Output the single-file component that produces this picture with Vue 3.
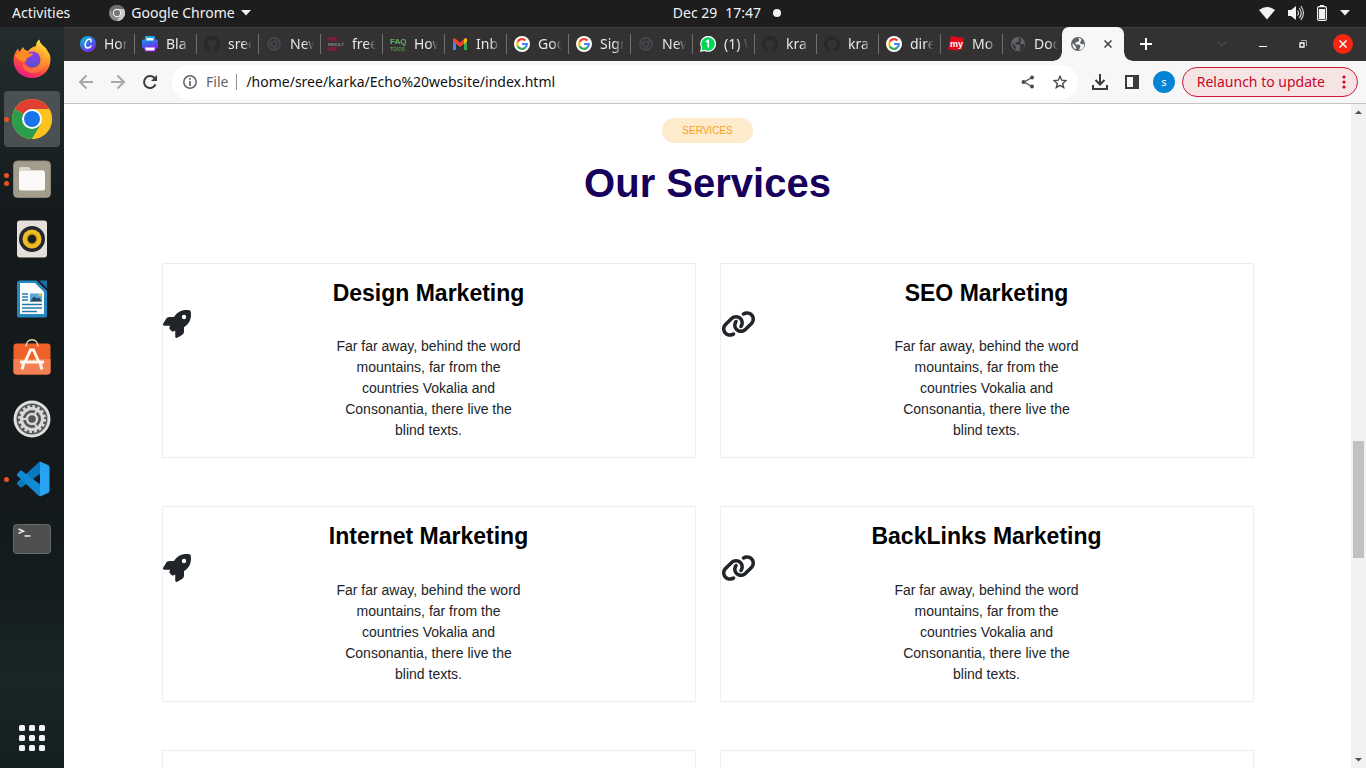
<script setup>
import { ref } from 'vue'

const tabs = [
  { icon: 'canva', title: 'Hor' },
  { icon: 'print', title: 'Bla' },
  { icon: 'github', title: 'sree' },
  { icon: 'chrome', title: 'New' },
  { icon: 'results', title: 'free' },
  { icon: 'faq', title: 'How' },
  { icon: 'gmail', title: 'Inb' },
  { icon: 'google', title: 'Goo' },
  { icon: 'google', title: 'Sign' },
  { icon: 'chrome', title: 'New' },
  { icon: 'whatsapp', title: '(1) W' },
  { icon: 'github', title: 'kra' },
  { icon: 'github', title: 'kra' },
  { icon: 'google', title: 'dire' },
  { icon: 'my', title: 'Mo' },
  { icon: 'globe', title: 'Doc' }
]

const dock = [
  { id: 'firefox', label: 'Firefox', dots: 0 },
  { id: 'chrome', label: 'Google Chrome', dots: 1, active: true },
  { id: 'files', label: 'Files', dots: 2 },
  { id: 'rhythmbox', label: 'Rhythmbox', dots: 0 },
  { id: 'writer', label: 'LibreOffice Writer', dots: 0 },
  { id: 'software', label: 'Ubuntu Software', dots: 0 },
  { id: 'settings', label: 'Settings', dots: 0 },
  { id: 'code', label: 'Visual Studio Code', dots: 1 },
  { id: 'terminal', label: 'Terminal', dots: 0 }
]

const blurb = 'Far far away, behind the word mountains, far from the countries Vokalia and Consonantia, there live the blind texts.'
const services = [
  { title: 'Design Marketing', icon: 'rocket' },
  { title: 'SEO Marketing', icon: 'link' },
  { title: 'Internet Marketing', icon: 'rocket' },
  { title: 'BackLinks Marketing', icon: 'link' }
]

const url = ref('/home/sree/karka/Echo%20website/index.html')
</script>

<template>
  <div class="desktop">
    <header class="topbar">
      <div class="top-left">
        <button class="top-btn" type="button">Activities</button>
        <button class="top-btn app-menu" type="button">
          <svg width="16" height="16" viewBox="0 0 16 16" aria-hidden="true">
            <circle cx="8" cy="8" r="8" fill="#8b8b8b" />
            <path d="M8 4h7a8 8 0 0 1-7 12l3.4-6z" fill="#c9c9c9" />
            <path d="M1 4a8 8 0 0 1 14 0H8L4.5 10z" fill="#6e6e6e" />
            <circle cx="8" cy="8" r="4.2" fill="#eee" />
            <circle cx="8" cy="8" r="3.1" fill="#777" />
          </svg>
          <span>Google Chrome</span>
          <svg width="10" height="6" viewBox="0 0 10 6" aria-hidden="true"><path d="M0 0h10L5 5.500z" fill="#f2f2f2" /></svg>
        </button>
      </div>
      <button class="top-btn clock" type="button"><span>Dec 29</span><span>17:47</span><i class="notice"></i></button>
      <button class="top-btn tray" type="button" aria-label="System menu">
        <svg width="16" height="14" viewBox="0 0 16 14"><path d="M0 4Q8-2 16 4L8 13.500z" fill="#f2f2f2" /></svg>
        <svg width="16" height="16" viewBox="0 0 16 16">
          <path d="M0 5h3l5-4v14l-5-4H0z" fill="#f2f2f2" />
          <path d="M9.500 5.500q2 2.500 0 5M11.200 3.200q4 4.800 0 9.600M12.800 1q5.200 7 0 14" fill="none" stroke="#cfcfcf" stroke-width="1.200" />
        </svg>
        <svg width="10" height="16" viewBox="0 0 10 16">
          <path d="M3 0h4v2H3z" fill="#f2f2f2" /><rect x="0.600" y="1.600" width="8.800" height="13.800" rx="1.500" fill="none" stroke="#f2f2f2" stroke-width="1.200" />
          <path d="M2 4h6v10H2z" fill="#f2f2f2" />
        </svg>
        <svg width="10" height="6" viewBox="0 0 10 6"><path d="M0 0h10L5 5.500z" fill="#f2f2f2" /></svg>
      </button>
    </header>

    <div class="workspace">
      <nav class="dock" aria-label="Dock">
        <button v-for="app in dock" :key="app.id" class="dock-item" :class="{ active: app.active }" type="button" :aria-label="app.label">
          <span class="dots"><i v-for="n in app.dots" :key="n"></i></span>
          <svg width="40" height="40" viewBox="0 0 40 40">
            <template v-if="app.id === 'firefox'">
              <defs>
                <linearGradient id="fx1" x1="0.800" y1="0" x2="0.300" y2="1"><stop offset="0" stop-color="#fff044" /><stop offset="0.400" stop-color="#ff9a2b" /><stop offset="0.700" stop-color="#ff4a3d" /><stop offset="1" stop-color="#e3168a" /></linearGradient>
                <linearGradient id="fx2" x1="0.300" y1="0" x2="0.600" y2="1"><stop offset="0" stop-color="#9a3cf0" /><stop offset="1" stop-color="#5551cf" /></linearGradient>
              </defs>
              <path d="M24 7c0-3 1.500-5.500 3.500-6.500 0 3 2 4.500 4.500 7 2.500 2 3 3 3.500 4.500 2.500 3 3.200 6 3 9C38 31.500 30.500 39 20 39S1.500 31.500 1.500 21c0-5 2.300-9 4.500-11.500.3 1.500.8 2.300 1.500 3C9 11.500 10 9 11 8c1 2.500 2.500 3.500 5 4 2-2.500 5-4.500 8-5z" fill="url(#fx1)" />
              <circle cx="20.500" cy="20.500" r="8" fill="url(#fx2)" />
              <path d="M3 16c5-3 11-3 14-1.500h4c-.5 2.500-2.500 3-5 4-2 1-2 2.500-1 4-3-.5-3.500-1-4 1-3-2-6.500-5-8-7.500z" fill="#ff8b23" />
              <path d="M20 11c7-1 10.500 4 10 10-1.500 6-6 8-9.500 8-4.500 0-8-2-9.500-6-1.500 7 3.500 11 9.500 11 8 0 14-6 13.500-14-.5-6-6.500-10-14-9z" fill="#ffa02f" opacity="0.450" />
            </template>
            <template v-else-if="app.id === 'chrome'">
              <circle cx="20" cy="20" r="20" fill="#fcc31e" />
              <path d="M20 20 2.700 10A20 20 0 0 1 37.300 10z" fill="#df3e30" />
              <path d="M2.700 10A20 20 0 0 0 20 40l9-15-9-5z" fill="#2c9d4c" />
              <path d="M20 40A20 20 0 0 0 37.300 10H20l9 15z" fill="#fcc31e" />
              <circle cx="20" cy="20" r="10" fill="#fff" /><circle cx="20" cy="20" r="8" fill="#1a73e8" />
            </template>
            <template v-else-if="app.id === 'files'">
              <rect x="1.500" y="2" width="37" height="36.500" rx="4" fill="#a49d8e" stroke="#8b8476" />
              <path d="M7 10q0-2 2-2h8l2 3h13v8H7z" fill="#ddd8cb" />
              <rect x="7" y="12" width="26" height="19.500" rx="2" fill="#fbfaf8" />
            </template>
            <template v-else-if="app.id === 'rhythmbox'">
              <rect x="5" y="1.500" width="30" height="37" rx="3" fill="#e5e0d9" />
              <circle cx="20" cy="20" r="13" fill="#25262f" /><circle cx="20" cy="20" r="9.500" fill="#eebd24" />
              <circle cx="20" cy="20" r="5.500" fill="#c79312" /><circle cx="20" cy="20" r="4.200" fill="#1d2023" />
            </template>
            <template v-else-if="app.id === 'writer'">
              <path d="M8 1.500h16.500L35 12v24.500q0 2-2 2H7q-2 0-2-2v-32q0-3 3-3z" fill="#2488bf" />
              <path d="M8 4h15l9 9v22H8z" fill="#fcfcfc" /><path d="M27 1.500h8v8z" fill="#1c6c9f" />
              <path d="M10 15h6M10 18h6M10 21h6M10 25.500h20M10 29h20M10 32.500h15" stroke="#2579a9" stroke-width="1.400" />
              <path d="M18 14.500h12v8H18z" fill="#58a8dc" /><path d="m18 22.500 4-5 3 2 2-1 3 4z" fill="#28485a" /><circle cx="28" cy="16" r="1.300" fill="#f8c332" />
            </template>
            <template v-else-if="app.id === 'software'">
              <rect x="1.500" y="4.500" width="37" height="31" rx="3" fill="#ee6129" /><path d="M1.500 20h37v12.500q0 3-3 3h-31q-3 0-3-3z" fill="#f37f52" />
              <path d="M14 7.500c0-9 12-9 12 0" fill="none" stroke="#ecd9b0" stroke-width="1.500" />
              <path d="m13.500 22 5-11h3l5 11M11.500 25l-1 4M28.500 25l1 4" fill="none" stroke="#fff7ef" stroke-width="3" stroke-linecap="square" />
              <path d="M8 23h24" stroke="#fff7ef" stroke-width="3" />
            </template>
            <template v-else-if="app.id === 'settings'">
              <circle cx="20" cy="20" r="18.500" fill="#dfdfde" /><circle cx="20" cy="20" r="15.500" fill="#555" />
              <circle cx="20" cy="20" r="12.500" fill="none" stroke="#d9d9d8" stroke-width="3" stroke-dasharray="2.600 2.309" />
              <circle cx="20" cy="20" r="10.500" fill="none" stroke="#d9d9d8" stroke-width="3" />
              <circle cx="20" cy="20" r="5" fill="none" stroke="#d9d9d8" stroke-width="2.500" />
              <path d="M15 20h-5M22.500 15.700l2.500-4.500M22.500 24.300l2.500 4.500" stroke="#d9d9d8" stroke-width="2" />
            </template>
            <template v-else-if="app.id === 'code'">
              <path d="m27.500 2.500-22 20.500c-.8.800-.8 1.800 0 2.500l2.500 2.500c.7.600 1.500.6 2.200.1L33 11z" fill="#0a78bd" />
              <path d="m27.500 37.500-22-20.500c-.8-.800-.8-1.800 0-2.500L8 12c.7-.6 1.500-.6 2.200-.1L33 29z" fill="#1189d3" />
              <path d="M28 2.500 36 6q1.500.7 1.500 2.500v23q0 1.800-1.500 2.500l-8 3.500z" fill="#28a3f2" />
            </template>
            <template v-else>
              <rect x="1.500" y="5.500" width="37" height="29" rx="3" fill="#4e4f4f" stroke="#6a6b6b" />
              <path d="m6.500 10 5 2.200-5 2.200" fill="none" stroke="#eee" stroke-width="1.500" /><path d="M12.500 17h6" stroke="#eee" stroke-width="1.500" />
            </template>
          </svg>
        </button>
        <button class="apps" type="button" aria-label="Show applications">
          <svg width="26" height="26" viewBox="0 0 26 26" fill="#f4f4f4">
            <template v-for="r in 3" :key="r"><rect v-for="c in 3" :key="c" :x="c * 10 - 10" :y="r * 10 - 10" width="6" height="6" rx="1.500" /></template>
          </svg>
        </button>
      </nav>

      <section class="browser">
        <div class="tabstrip">
          <div class="tabs">
            <button v-for="(tab, i) in tabs" :key="i" class="tab" type="button">
              <svg width="16" height="16" viewBox="0 0 16 16" aria-hidden="true">
                <template v-if="tab.icon === 'canva'">
                  <defs><linearGradient id="cv" x1="0.100" y1="0" x2="0.800" y2="1"><stop offset="0" stop-color="#00c4e0" /><stop offset="0.500" stop-color="#3a6fe0" /><stop offset="1" stop-color="#8a1df0" /></linearGradient></defs>
                  <circle cx="8" cy="8" r="8" fill="url(#cv)" /><path d="M10.500 6.300c1-1 .6-3.300-.9-3.300-2.400 0-4.400 3-4.400 5.800 0 4.200 4.400 4.200 6.200.7" fill="none" stroke="#fff" stroke-width="1.500" />
                </template>
                <template v-else-if="tab.icon === 'print'">
                  <defs><linearGradient id="pr" x1="0" y1="0" x2="0.300" y2="1"><stop offset="0" stop-color="#08c8dc" /><stop offset="0.500" stop-color="#356ee6" /><stop offset="1" stop-color="#9611ff" /></linearGradient></defs>
                  <path d="M3 0h10v3.500h1.500Q16 3.500 16 5v6q0 1.500-1.500 1.500H14l-1 3H3l-1-3h-.5Q0 12.500 0 11V5q0-1.500 1.500-1.500H3z" fill="url(#pr)" />
                  <path d="M4.500 2h7v2.500h-7zM3 11.500h10l-.8 3H3.800z" fill="#fff" />
                </template>
                <path v-else-if="tab.icon === 'github'" fill="#24292f" d="M8 0C3.580 0 0 3.580 0 8c0 3.540 2.290 6.530 5.470 7.590.4.070.55-.17.55-.38 0-.19-.01-.82-.01-1.490-2.010.37-2.530-.49-2.690-.94-.09-.23-.48-.94-.82-1.130-.28-.15-.68-.52-.01-.53.63-.01 1.080.58 1.230.82.720 1.210 1.870.87 2.330.66.070-.52.280-.87.510-1.070-1.780-.2-3.640-.89-3.640-3.950 0-.87.310-1.590.82-2.150-.08-.2-.36-1.020.08-2.120 0 0 .67-.21 2.200.82.640-.18 1.320-.27 2-.27s1.360.09 2 .27c1.530-1.040 2.200-.82 2.200-.82.440 1.100.160 1.920.080 2.120.51.560.82 1.270.82 2.150 0 3.070-1.870 3.750-3.650 3.950.29.250.54.730.54 1.480 0 1.070-.01 1.930-.01 2.200 0 .21.15.46.55.38A8 8 0 0 0 16 8c0-4.420-3.580-8-8-8z" />
                <g v-else-if="tab.icon === 'chrome'" fill="none" stroke="#43474b" stroke-width="1.800"><circle cx="8" cy="8" r="6" /><circle cx="8" cy="8" r="2.600" /><path d="M8 5.400h6M5.700 9.200 2.700 4.500M10.200 9.400l-2.700 4.800" /></g>
                <g v-else-if="tab.icon === 'results'" font-family="Liberation Sans" font-weight="700"><path d="M0 1h9v4H0zM0 11h9v4H0z" fill="#751c43" /><text x="0" y="10" font-size="4" fill="#8b898c">RESULTS</text></g>
                <g v-else-if="tab.icon === 'faq'" font-family="Liberation Sans" font-weight="700"><text x="0" y="8" font-size="8" fill="#62b15b">FAQ</text><text x="0" y="15" font-size="5" fill="#528c50">TOIDS</text></g>
                <template v-else-if="tab.icon === 'gmail'">
                  <path d="M1 4v10h3V7z" fill="#4285f4" /><path d="M12 7v7h3V4z" fill="#34a853" /><path d="m1 3 1.500-1L8 6.500 13.500 2 15 3v2.500L8 11 1 5.500z" fill="#ea4335" /><path d="M12 3.500q2-2 3-.5v2.500L12 8z" fill="#fbbc04" />
                </template>
                <template v-else-if="tab.icon === 'google'">
                  <circle cx="8" cy="8" r="8" fill="#fff" />
                  <g fill="none" stroke-width="2.200"><path d="M11.500 4.500A4.800 4.800 0 0 0 3.700 5.900" stroke="#ea4335" /><path d="M3.700 5.900a4.800 4.800 0 0 0 0 4.300" stroke="#fbbc05" /><path d="M3.700 10.200a4.800 4.800 0 0 0 7.500 1.400" stroke="#34a853" /><path d="M8 8h4.800q0 2.200-1.600 3.600" stroke="#4285f4" /></g>
                </template>
                <template v-else-if="tab.icon === 'whatsapp'">
                  <path d="m0 16 1-4.500a8 8 0 1 1 3.500 3.500z" fill="#fff" /><path d="m1.500 14.500.8-3a6.700 6.700 0 1 1 2.400 2.300z" fill="#00d757" /><path d="m6 6 2.300-1.500V11.500" fill="none" stroke="#fff" stroke-width="1.500" />
                </template>
                <g v-else-if="tab.icon === 'my'"><path d="m3 0 13 2-2 12-3-1-1 2-10-2z" fill="#e20a17" /><text x="2" y="11" font-family="Liberation Sans" font-size="9" font-weight="700" fill="#fff">my</text></g>
                <g v-else><circle cx="8" cy="8" r="7" fill="#5f6368" /><path d="M8 2.500q2 1 .5 3l-3 1v2h3q2 0 2 2l-1.500 3.500q6-.5 5-6-3 1-4-1l1.500-3.500Q10 1.500 8 2.500zM2.500 7l3.500 4v2.500Q2 12 2.500 7z" fill="#333132" /></g>
              </svg>
              <span class="tab-title">{{ tab.title }}</span>
            </button>
            <div class="tab-active">
              <svg width="16" height="16" viewBox="0 0 16 16" aria-hidden="true"><circle cx="8" cy="8" r="7" fill="#5f6368" /><path d="M8 2.500q2 1 .5 3l-3 1v2h3q2 0 2 2l-1.500 3.500q6-.5 5-6-3 1-4-1l1.500-3.500Q10 1.500 8 2.500zM2.500 7l3.500 4v2.500Q2 12 2.500 7z" fill="#f7f7f7" /></svg>
              <button class="icon-btn" type="button" aria-label="Close tab"><svg width="8" height="8" viewBox="0 0 8 8"><path d="m.5.5 7 7m0-7-7 7" stroke="#3c4043" stroke-width="1.500" /></svg></button>
            </div>
            <button class="icon-btn new-tab" type="button" aria-label="New tab"><svg width="12" height="12" viewBox="0 0 12 12"><path d="M6 0v12M0 6h12" stroke="#fff" stroke-width="2" /></svg></button>
          </div>
          <div class="window-controls">
            <button class="icon-btn" type="button" aria-label="Search tabs"><svg width="10" height="6" viewBox="0 0 10 6"><path d="m.5.5 4.500 4.500L9.500.5" fill="none" stroke="#454545" stroke-width="1.500" /></svg></button>
            <button class="icon-btn" type="button" aria-label="Minimize"><svg width="8" height="8" viewBox="0 0 8 8"><path d="M0 6.500h8" stroke="#fff" /></svg></button>
            <button class="icon-btn" type="button" aria-label="Restore"><svg width="8" height="8" viewBox="0 0 8 8" fill="none"><path d="M2 .5h5.500V6" stroke="#aaa" /><path d="M1 3h4v4H1z" stroke="#fff" stroke-width="1.300" /></svg></button>
            <button class="icon-btn win-close" type="button" aria-label="Close window"><svg width="8" height="8" viewBox="0 0 8 8"><path d="m.5.5 7 7m0-7-7 7" stroke="#fff" stroke-width="1.500" /></svg></button>
          </div>
        </div>

        <div class="toolbar">
          <div class="nav-buttons">
            <button class="icon-btn" type="button" aria-label="Back"><svg width="16" height="16" viewBox="0 0 16 16"><path d="M15 8H2m6.500-6.500L2 8l6.500 6.500" fill="none" stroke="#a8a8a8" stroke-width="2" /></svg></button>
            <button class="icon-btn" type="button" aria-label="Forward"><svg width="16" height="16" viewBox="0 0 16 16"><path d="M1 8h13M7.500 1.500 14 8l-6.500 6.500" fill="none" stroke="#a8a8a8" stroke-width="2" /></svg></button>
            <button class="icon-btn" type="button" aria-label="Reload"><svg width="16" height="16" viewBox="0 0 16 16"><path d="M13.500 10.500A6 6 0 1 1 12.300 3.800L14 5.500" fill="none" stroke="#3b3b3b" stroke-width="2" /><path d="M15 1v6H9z" fill="#3b3b3b" /></svg></button>
          </div>
          <div class="omnibox">
            <svg width="14" height="14" viewBox="0 0 14 14" aria-hidden="true"><circle cx="7" cy="7" r="6.200" fill="none" stroke="#5f6368" stroke-width="1.500" /><path d="M7 3v1.700M7 6v5" stroke="#5f6368" stroke-width="1.700" /></svg>
            <label class="scheme" for="address">File</label>
            <input id="address" v-model="url" class="address" type="text" spellcheck="false" />
            <button class="icon-btn" type="button" aria-label="Share"><svg width="14" height="14" viewBox="0 0 14 14"><path d="M11 2.500 3 7l8 4.500" fill="none" stroke="#4a4a4a" stroke-width="1.300" /><g fill="#4a4a4a"><circle cx="11" cy="2.500" r="2" /><circle cx="2.500" cy="7" r="2" /><circle cx="11" cy="11.500" r="2" /></g></svg></button>
            <button class="icon-btn" type="button" aria-label="Bookmark this page"><svg width="14" height="14" viewBox="0 0 14 14"><path d="m7 1.300 1.700 3.900 4.200.4-3.200 2.800 1 4.200L7 10.400l-3.700 2.200 1-4.200L1.100 5.600l4.200-.4z" fill="none" stroke="#4a4a4a" stroke-width="1.400" /></svg></button>
          </div>
          <div class="actions">
            <button class="icon-btn" type="button" aria-label="Downloads"><svg width="16" height="16" viewBox="0 0 16 16"><path d="M8 0v10M3.500 6 8 10.500 12.500 6M1 11v4h14v-4" fill="none" stroke="#3b3b3b" stroke-width="2" /></svg></button>
            <button class="icon-btn" type="button" aria-label="Side panel"><svg width="14" height="14" viewBox="0 0 14 14"><path d="M1 1h12v12H1z" fill="none" stroke="#3b3b3b" stroke-width="2" /><path d="M8 1h5v12H8z" fill="#3b3b3b" /></svg></button>
            <button class="avatar" type="button" aria-label="Profile">s</button>
            <button class="relaunch" type="button"><span>Relaunch to update</span><svg width="4" height="14" viewBox="0 0 4 14" fill="#c9061f"><circle cx="2" cy="2" r="1.600" /><circle cx="2" cy="7" r="1.600" /><circle cx="2" cy="12" r="1.600" /></svg></button>
          </div>
        </div>

        <div class="viewport">
          <main class="page">
            <span class="pill">SERVICES</span>
            <h1>Our Services</h1>
            <div class="cards">
              <article v-for="s in services" :key="s.title" class="card">
                <h2>{{ s.title }}</h2>
                <div class="glyph">
                  <svg v-if="s.icon === 'rocket'" width="28" height="28" viewBox="0 0 512 512"><path fill="#212529" d="M156.600 384.900L125.700 354c-8.500-8.500-11.500-20.800-7.700-32.200c3-8.900 7-20.500 11.800-33.800L24 288c-8.600 0-16.600-4.600-20.900-12.100s-4.200-16.700 .2-24.100l52.500-88.500c13-21.900 36.500-35.300 61.900-35.300l82.300 0c2.400-4 4.800-7.700 7.200-11.300C289.100-4.100 411.100-8.100 483.900 5.300c11.600 2.100 20.600 11.200 22.800 22.800c13.400 72.900 9.300 194.800-111.400 276.700c-3.500 2.400-7.300 4.800-11.300 7.200v82.300c0 25.400-13.400 49-35.300 61.900l-88.500 52.500c-7.400 4.400-16.600 4.500-24.100 .2s-12.100-12.200-12.100-20.900V380.800c-14.100 4.900-26.400 8.900-35.700 11.900c-11.200 3.600-23.400 .5-31.800-7.800zM384 168a40 40 0 1 0 0-80 40 40 0 1 0 0 80z" /></svg>
                  <svg v-else width="35" height="28" viewBox="0 0 640 512"><path fill="#212529" d="M579.800 267.700c56.500-56.500 56.500-148 0-204.500c-50-50-128.800-56.500-186.300-15.400l-1.600 1.100c-14.400 10.300-17.700 30.300-7.400 44.600s30.300 17.700 44.600 7.400l1.600-1.100c32.100-22.900 76-19.300 103.800 8.600c31.500 31.500 31.500 82.500 0 114L422.300 334.800c-31.500 31.500-82.500 31.500-114 0c-27.900-27.900-31.500-71.800-8.600-103.800l1.100-1.600c10.300-14.400 6.900-34.400-7.400-44.600s-34.400-6.900-44.600 7.400l-1.100 1.600C206.500 251.200 213 330 263 380c56.500 56.500 148 56.500 204.500 0L579.800 267.700zM60.200 244.300c-56.500 56.500-56.500 148 0 204.500c50 50 128.800 56.500 186.300 15.400l1.600-1.100c14.400-10.300 17.700-30.300 7.400-44.600s-30.300-17.700-44.600-7.400l-1.600 1.100c-32.100 22.900-76 19.300-103.800-8.600C74 372 74 321 105.500 289.500L217.700 177.200c31.500-31.500 82.500-31.500 114 0c27.900 27.900 31.500 71.800 8.600 103.900l-1.100 1.600c-10.300 14.400-6.900 34.400 7.400 44.600s34.400 6.900 44.600-7.400l1.100-1.600C433.500 260.800 427 182 377 132c-56.500-56.500-148-56.500-204.500 0L60.200 244.300z" /></svg>
                </div>
                <p>{{ blurb }}</p>
              </article>
              <article class="card"></article>
              <article class="card"></article>
            </div>
          </main>
          <div class="scrollbar" aria-hidden="true">
            <svg width="15" height="17" viewBox="0 0 15 17"><path d="M4 10h7L7.500 6.500z" fill="#505050" /></svg>
            <div class="track"><div class="before"></div><div class="thumb"></div><div class="after"></div></div>
            <svg width="15" height="17" viewBox="0 0 15 17"><path d="M4 7h7l-3.500 3.500z" fill="#505050" /></svg>
          </div>
        </div>
      </section>
    </div>
  </div>
</template>

<style>
body {
  margin: 0;
  overflow: hidden;
}
</style>

<style scoped>
.desktop {
  display: flex;
  flex-direction: column;
  height: 100vh;
  overflow: hidden;
  font-family: "Noto Sans", sans-serif;
  font-size: 14px;
  background: #1d1d1d;
}
button {
  font: inherit;
  color: inherit;
  border: 0;
  padding: 0;
  background: none;
}
svg {
  display: block;
  flex: none;
}
.topbar {
  display: grid;
  grid-template-columns: 1fr auto 1fr;
  align-items: center;
  height: 27px;
  flex: none;
  padding: 0 16px 2px 12px;
  box-sizing: border-box;
  color: #f2f2f2;
}
.top-left,
.top-btn {
  display: flex;
  align-items: center;
}
.top-left {
  gap: 39px;
}
.app-menu {
  gap: 6px;
}
.clock {
  gap: 8px;
  margin-left: 92px;
}
.notice {
  width: 8px;
  height: 8px;
  margin-left: 4px;
  border-radius: 50%;
  background: #f2f2f2;
}
.tray {
  justify-self: end;
  gap: 13px;
}
.workspace {
  display: flex;
  flex: 1;
  min-height: 0;
}
.dock {
  display: flex;
  flex-direction: column;
  align-items: center;
  width: 64px;
  flex: none;
  padding: 4px 0 17px;
  gap: 4px;
  box-sizing: border-box;
  background: linear-gradient(#232d2d 0, #1e2727 10%, #151b1d 24%, #14191b 58%, #141c1e 76%, #182627 88%, #141f21 100%);
}
.dock-item {
  position: relative;
  display: flex;
  align-items: center;
  justify-content: center;
  width: 56px;
  height: 56px;
  border-radius: 4px;
}
.dock-item.active {
  background: #4b5153;
}
.dots {
  position: absolute;
  left: 0;
  top: 0;
  bottom: 0;
  display: flex;
  flex-direction: column;
  justify-content: center;
  gap: 3px;
}
.dots i {
  width: 5px;
  height: 5px;
  border-radius: 50%;
  background: #e95420;
}
.apps {
  margin-top: auto;
}
.browser {
  display: flex;
  flex-direction: column;
  flex: 1;
  min-width: 0;
}
.tabstrip {
  display: flex;
  justify-content: space-between;
  height: 34px;
  flex: none;
  padding: 0 13px 0 9px;
  background: #333132;
  box-shadow: inset 0 1px #434142;
}
.tabs,
.window-controls,
.nav-buttons,
.actions {
  display: flex;
  align-items: center;
}
.tab {
  position: relative;
  display: flex;
  align-items: center;
  gap: 8px;
  width: 62px;
  height: 34px;
  padding: 0 7px;
  box-sizing: border-box;
  color: #e8e8e8;
}
.tab:not(:nth-child(16))::after {
  content: "";
  position: absolute;
  right: 0;
  top: 7px;
  width: 1px;
  height: 20px;
  background: #716f70;
}
.tab-title {
  flex: 1;
  min-width: 0;
  padding-bottom: 2px;
  overflow: hidden;
  white-space: nowrap;
  text-align: left;
  mask-image: linear-gradient(90deg, #000 60%, transparent);
}
.tab-active {
  position: relative;
  display: flex;
  align-items: center;
  justify-content: space-between;
  width: 62px;
  height: 34px;
  margin-left: -3px;
  padding: 0 12px 0 8px;
  box-sizing: border-box;
  border-radius: 7px 7px 0 0;
  background: #f7f7f7;
}
.tab-active::before,
.tab-active::after {
  content: "";
  position: absolute;
  bottom: 0;
  width: 8px;
  height: 8px;
}
.tab-active::before {
  right: 100%;
  background: radial-gradient(circle at 0 0, transparent 7px, #f7f7f7 8px);
}
.tab-active::after {
  left: 100%;
  background: radial-gradient(circle at 100% 0, transparent 7px, #f7f7f7 8px);
}
.new-tab {
  margin-left: 16px;
}
.window-controls {
  gap: 32px;
}
.win-close {
  display: grid;
  place-items: center;
  width: 20px;
  height: 20px;
  border-radius: 50%;
  background: #f82510;
  margin-left: -6px;
}
.toolbar {
  display: flex;
  align-items: center;
  height: 43px;
  flex: none;
  padding: 0 8px 0 14px;
  box-sizing: border-box;
  background: #f7f7f7;
  border-bottom: 1px solid #c3c3c3;
}
.nav-buttons {
  gap: 16px;
}
.omnibox {
  display: flex;
  align-items: center;
  flex: 1;
  gap: 18px;
  height: 34px;
  margin-left: 14px;
  padding: 0 11px;
  box-sizing: border-box;
  border-radius: 17px;
  background: #fff;
}
.scheme {
  margin-left: -9px;
  padding-right: 8px;
  line-height: 16px;
  border-right: 1px solid #8d9094;
  color: #5f6368;
}
.address {
  flex: 1;
  min-width: 0;
  margin-left: -9px;
  padding: 0 0 2px;
  border: 0;
  outline: 0;
  font: inherit;
  color: #111;
  background: none;
}
.actions {
  gap: 17px;
  margin-left: 14px;
}
.avatar {
  width: 22px;
  height: 22px;
  margin-left: -3px;
  border-radius: 50%;
  background: #0583d4;
  color: #fff;
  font-size: 11px;
  line-height: 20px;
}
.relaunch {
  display: flex;
  align-items: center;
  gap: 17px;
  height: 30px;
  margin-left: -10px;
  padding: 0 11px 0 14px;
  border: 1px solid #cf1734;
  border-radius: 15px;
  background: #f6e4e5;
  color: #c9061f;
}
.relaunch span {
  padding-bottom: 2px;
}
.viewport {
  display: flex;
  flex: 1;
  min-height: 0;
  background: #fff;
}
.page {
  display: flex;
  flex-direction: column;
  align-items: center;
  flex: 1;
  min-width: 0;
  padding: 14px 24px 0;
  overflow: hidden;
  font-family: "Liberation Sans", Arial, sans-serif;
  color: #212529;
}
.pill {
  flex: none;
  padding: 0 20px;
  border-radius: 13px;
  background: #fdebcb;
  color: #f9a11b;
  font-size: 10px;
  line-height: 25px;
}
h1 {
  margin: 17px 0 56px;
  color: #15005b;
  font-size: 40px;
  line-height: 1.17;
}
.cards {
  display: grid;
  grid-template-columns: 1fr 1fr;
  gap: 48px 24px;
  width: 100%;
  max-width: 1092px;
}
.card {
  min-height: 160px;
  padding-top: 16px;
  border: 1px solid #ededed;
}
h2 {
  margin: 0 0 3px;
  color: #000;
  font-size: 23px;
  line-height: 1.2;
  text-align: center;
}
.glyph {
  height: 26px;
}
.card p {
  width: 200px;
  margin: 0 auto 16px;
  line-height: 21px;
  text-align: center;
}
.scrollbar {
  display: flex;
  flex-direction: column;
  width: 15px;
  flex: none;
  background: #f1f1f1;
}
.track {
  display: flex;
  flex-direction: column;
  flex: 1;
  padding: 0 2px;
}
.before {
  flex: 320;
}
.thumb {
  flex: 117;
  background: #c1c1c1;
}
.after {
  flex: 193;
}
</style>
